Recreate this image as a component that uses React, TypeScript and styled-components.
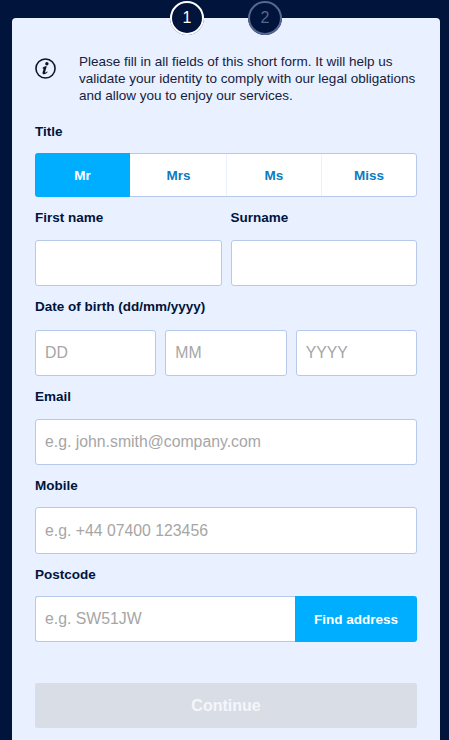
import React from "react";
import styled, { createGlobalStyle } from "styled-components";

const Global = createGlobalStyle`
  html, body { margin: 0; padding: 0; background: #00143c; height: 100%; }
  body { font-family: "Liberation Sans", Arial, sans-serif; overflow: hidden; }
  * { box-sizing: border-box; }
  input::placeholder { color: #a6a6a6; opacity: 1; }
`;

const Page = styled.div`
  width: 449px;
  height: 740px;
  overflow: hidden;
  padding: 18px 9px 0 12px;
`;

const Card = styled.main`
  position: relative;
  background: #e9f0ff;
  border-radius: 4px 4px 0 0;
  padding: 35px 23px 0;
  height: 740px;
`;

const Stepper = styled.ol`
  position: absolute;
  top: -17px;
  left: 158px;
  display: flex;
  gap: 44px;
  margin: 0;
  padding: 0;
  list-style: none;
`;

const Step = styled.li<{ $active?: boolean }>`
  width: 34px;
  height: 34px;
  border-radius: 50%;
  background: #00143c;
  display: flex;
  align-items: center;
  justify-content: center;
  &::before {
    content: attr(data-n);
    width: 30px;
    height: 30px;
    border-radius: 50%;
    display: flex;
    align-items: center;
    justify-content: center;
    font-size: 16px;
    border: 2px solid ${(p) => (p.$active ? "#ffffff" : "#56688e")};
    color: ${(p) => (p.$active ? "#ffffff" : "#56688e")};
  }
`;

const Info = styled.div`
  display: flex;
  align-items: flex-start;
  gap: 23px;
  margin-bottom: 20px;
`;

const InfoIcon = styled.svg`
  flex: none;
  width: 21px;
  height: 21px;
  margin-top: 5px;
`;

const InfoText = styled.p`
  margin: 0;
  font-size: 13.5px;
  line-height: 17px;
  color: #14213d;
`;

const Label = styled.label`
  display: block;
  font-size: 13.5px;
  font-weight: 700;
  line-height: 16px;
  color: #00143c;
  height: 16px;
`;

const Segments = styled.div`
  display: grid;
  grid-template-columns: repeat(4, 1fr);
  height: 44px;
  margin: 13px 0 13px;
  background: #fff;
  border: 1px solid #b7c9ea;
  border-radius: 3px;
`;

const Segment = styled.button<{ $active?: boolean }>`
  border: 0;
  border-left: 1px solid ${(p) => (p.$active ? "transparent" : "#e9f0ff")};
  padding: 0;
  margin: ${(p) => (p.$active ? "-1px 1px -1px -1px" : "0")};
  border-radius: ${(p) => (p.$active ? "3px 0 0 3px" : "0")};
  background: ${(p) => (p.$active ? "#00aeff" : "transparent")};
  color: ${(p) => (p.$active ? "#fff" : "#0a7cc1")};
  font: 700 13.5px "Liberation Sans", Arial, sans-serif;
  &:first-child { border-left: 0; }
  &:nth-child(2) { border-left: 0; }
`;

const Columns = styled.div<{ $cols: number; $gap: number }>`
  display: grid;
  grid-template-columns: repeat(${(p) => p.$cols}, 1fr);
  column-gap: ${(p) => p.$gap}px;
`;

const Field = styled.div`
  margin-bottom: 13px;
`;

const Input = styled.input<{ $mt?: number; $h?: number }>`
  display: block;
  width: 100%;
  height: ${(p) => p.$h ?? 46}px;
  margin-top: ${(p) => p.$mt ?? 14}px;
  padding: 0 9px;
  background: #fff;
  border: 1px solid #b7c9ea;
  border-radius: 3px;
  font: 15.8px "Liberation Sans", Arial, sans-serif;
  color: #00143c;
  outline: none;
`;

const InlineGroup = styled.div`
  display: flex;
  margin-top: 13px;
`;

const GroupInput = styled(Input)`
  flex: 1;
  min-width: 0;
  margin-top: 0;
  border-right: 0;
  border-radius: 3px 0 0 3px;
`;

const FindButton = styled.button`
  flex: none;
  width: 122px;
  height: 46px;
  border: 0;
  border-radius: 0 3px 3px 0;
  background: #00aeff;
  color: #fff;
  font: 700 13.5px "Liberation Sans", Arial, sans-serif;
`;

const ContinueButton = styled.button`
  display: block;
  width: 100%;
  height: 45px;
  margin-top: 41px;
  border: 0;
  border-radius: 2px;
  background: #d9dee6;
  color: #f4f6fa;
  font: 700 16px "Liberation Sans", Arial, sans-serif;
`;

export default function App() {
  return (
    <>
      <Global />
      <Page>
        <Card>
          <Stepper>
            <Step $active data-n="1" />
            <Step data-n="2" />
          </Stepper>
          <Info>
            <InfoIcon viewBox="0 0 20 20" aria-hidden="true">
              <circle cx="10" cy="10" r="9.1" fill="none" stroke="#0c1426" strokeWidth="1.5" />
              <circle cx="11.3" cy="5.5" r="1.6" fill="#0c1426" />
              <path d="M7.2 9.4c1-1.1 2.3-1.6 4-1.5l-1.6 5.4c-.1.5.3.6.7.4.4-.2.8-.5 1.2-.9l.6.6c-1 1.2-2.1 2-3.5 2-1.2 0-1.7-.7-1.4-1.7l1.1-3.8-.7.5z" fill="#0c1426" />
            </InfoIcon>
            <InfoText>
              Please fill in all fields of this short form. It will help us validate your identity to comply with our legal obligations and allow you to enjoy our services.
            </InfoText>
          </Info>
          <Label>Title</Label>
          <Segments>
            <Segment $active>Mr</Segment>
            <Segment>Mrs</Segment>
            <Segment>Ms</Segment>
            <Segment>Miss</Segment>
          </Segments>
          <Columns $cols={2} $gap={9}>
            <Field>
              <Label>First name</Label>
              <Input />
            </Field>
            <Field>
              <Label>Surname</Label>
              <Input />
            </Field>
          </Columns>
          <Label>Date of birth (dd/mm/yyyy)</Label>
          <Columns $cols={3} $gap={9}>
            <Field><Input $mt={15} placeholder="DD" /></Field>
            <Field><Input $mt={15} placeholder="MM" /></Field>
            <Field><Input $mt={15} placeholder="YYYY" /></Field>
          </Columns>
          <Field>
            <Label>Email</Label>
            <Input placeholder="e.g. john.smith@company.com" />
          </Field>
          <Field>
            <Label>Mobile</Label>
            <Input $mt={13} $h={47} placeholder="e.g. +44 07400 123456" />
          </Field>
          <Label>Postcode</Label>
          <InlineGroup>
            <GroupInput placeholder="e.g. SW51JW" />
            <FindButton>Find address</FindButton>
          </InlineGroup>
          <ContinueButton>Continue</ContinueButton>
        </Card>
      </Page>
    </>
  );
}
